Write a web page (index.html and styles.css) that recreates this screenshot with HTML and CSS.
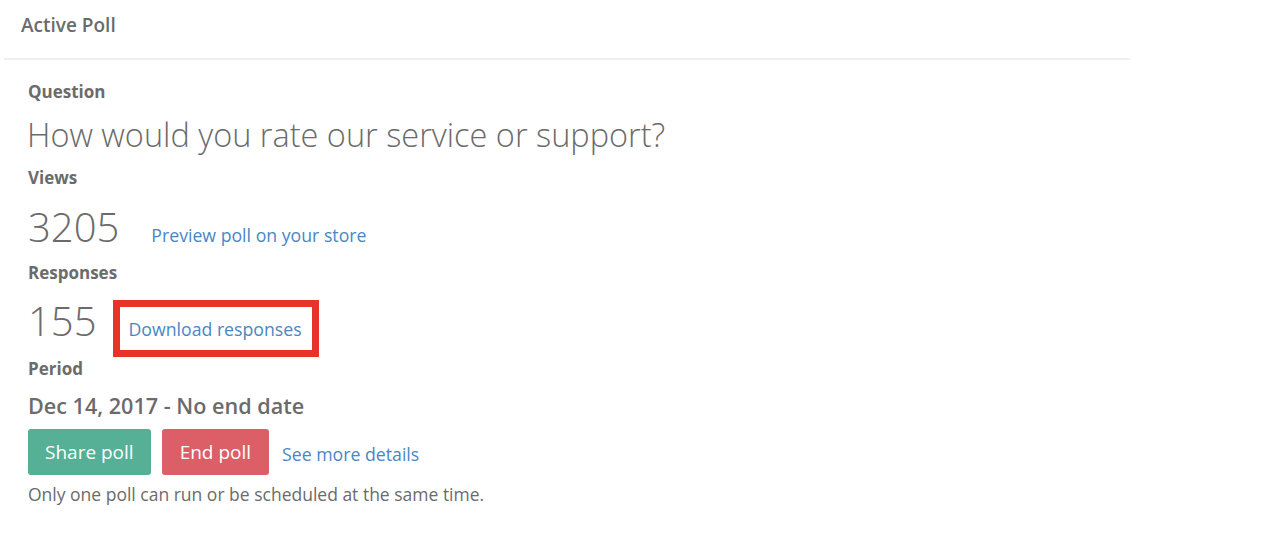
FILE: index.html
```html
<!DOCTYPE html>
<html>
<head>
<meta charset="utf-8">
<link rel="stylesheet" href="styles.css">
</head>
<body>
<div class="panel">
  <div class="panel-header">Active Poll</div>
  <div class="panel-body">
    <div class="label">Question</div>
    <div class="question">How would you rate our service or support?</div>
    <div class="label">Views</div>
    <div class="stat-row">
      <span class="stat">3205</span>
      <a class="link" href="#">Preview poll on your store</a>
    </div>
    <div class="label">Responses</div>
    <div class="stat-row stat-row-2">
      <span class="stat">155</span>
      <span class="highlight"><a class="link" href="#">Download responses</a></span>
    </div>
    <div class="label">Period</div>
    <div class="period">Dec 14, 2017 - No end date</div>
    <div class="actions">
      <button class="btn btn-share">Share poll</button>
      <button class="btn btn-end">End poll</button>
      <a class="link" href="#">See more details</a>
    </div>
    <div class="note">Only one poll can run or be scheduled at the same time.</div>
  </div>
</div>
</body>
</html>
```
FILE: styles.css
```css
html, body {
  margin: 0;
  padding: 0;
  background: #ffffff;
}
body {
  font-family: "Open Sans", "Liberation Sans", sans-serif;
  color: #6b6b6b;
}
.panel {
  width: 1126px;
  margin-left: 4px;
}
.panel-header {
  height: 60px;
  box-sizing: border-box;
  padding: 11px 0 0 17px;
  font-size: 19px;
  line-height: 28px;
  font-weight: 600;
  color: #6b6b6b;
  border-bottom: 2px solid #efefef;
}
.panel-body {
  padding: 20px 0 0 24px;
}
.label {
  font-size: 17px;
  font-weight: 700;
  color: #6b6b6b;
  line-height: 24px;
}
.question {
  font-size: 32.5px;
  font-weight: 300;
  color: #6b6b6b;
  line-height: 44px;
  margin: 9px 0 9px -1px;
}
.stat-row {
  display: flex;
  align-items: baseline;
  padding: 13px 0 10px 0;
}
.stat-row-2 {
  padding: 12px 0 7px 0;
}
.stat {
  font-size: 40px;
  font-weight: 300;
  color: #6b6b6b;
  line-height: 48px;
  margin-right: 32px;
}
.link {
  font-size: 17.7px;
  line-height: 24px;
  color: #4a86c5;
  text-decoration: none;
}
.highlight {
  display: inline-block;
  outline: 7px solid #e8332a;
  padding: 10px 10px 9px 9px;
  margin-left: -9px;
}
.period {
  font-size: 21.6px;
  font-weight: 600;
  color: #6b6b6b;
  line-height: 30px;
  margin-top: 10px;
}
.actions {
  display: flex;
  align-items: center;
  gap: 11px;
  margin-top: 8px;
}
.actions .link {
  padding-top: 4px;
  margin-left: 2px;
}
.btn {
  font-family: "Open Sans", "Liberation Sans", sans-serif;
  font-size: 19px;
  color: #ffffff;
  border: none;
  border-radius: 3px;
  height: 46px;
  padding: 0 17px;
  cursor: pointer;
}
.btn-share { background: #55b096; }
.btn-end { background: #dc5f68; padding: 0 18px; }
.note {
  font-size: 17.5px;
  line-height: 22px;
  color: #6b6b6b;
  margin-top: 8px;
}
```
